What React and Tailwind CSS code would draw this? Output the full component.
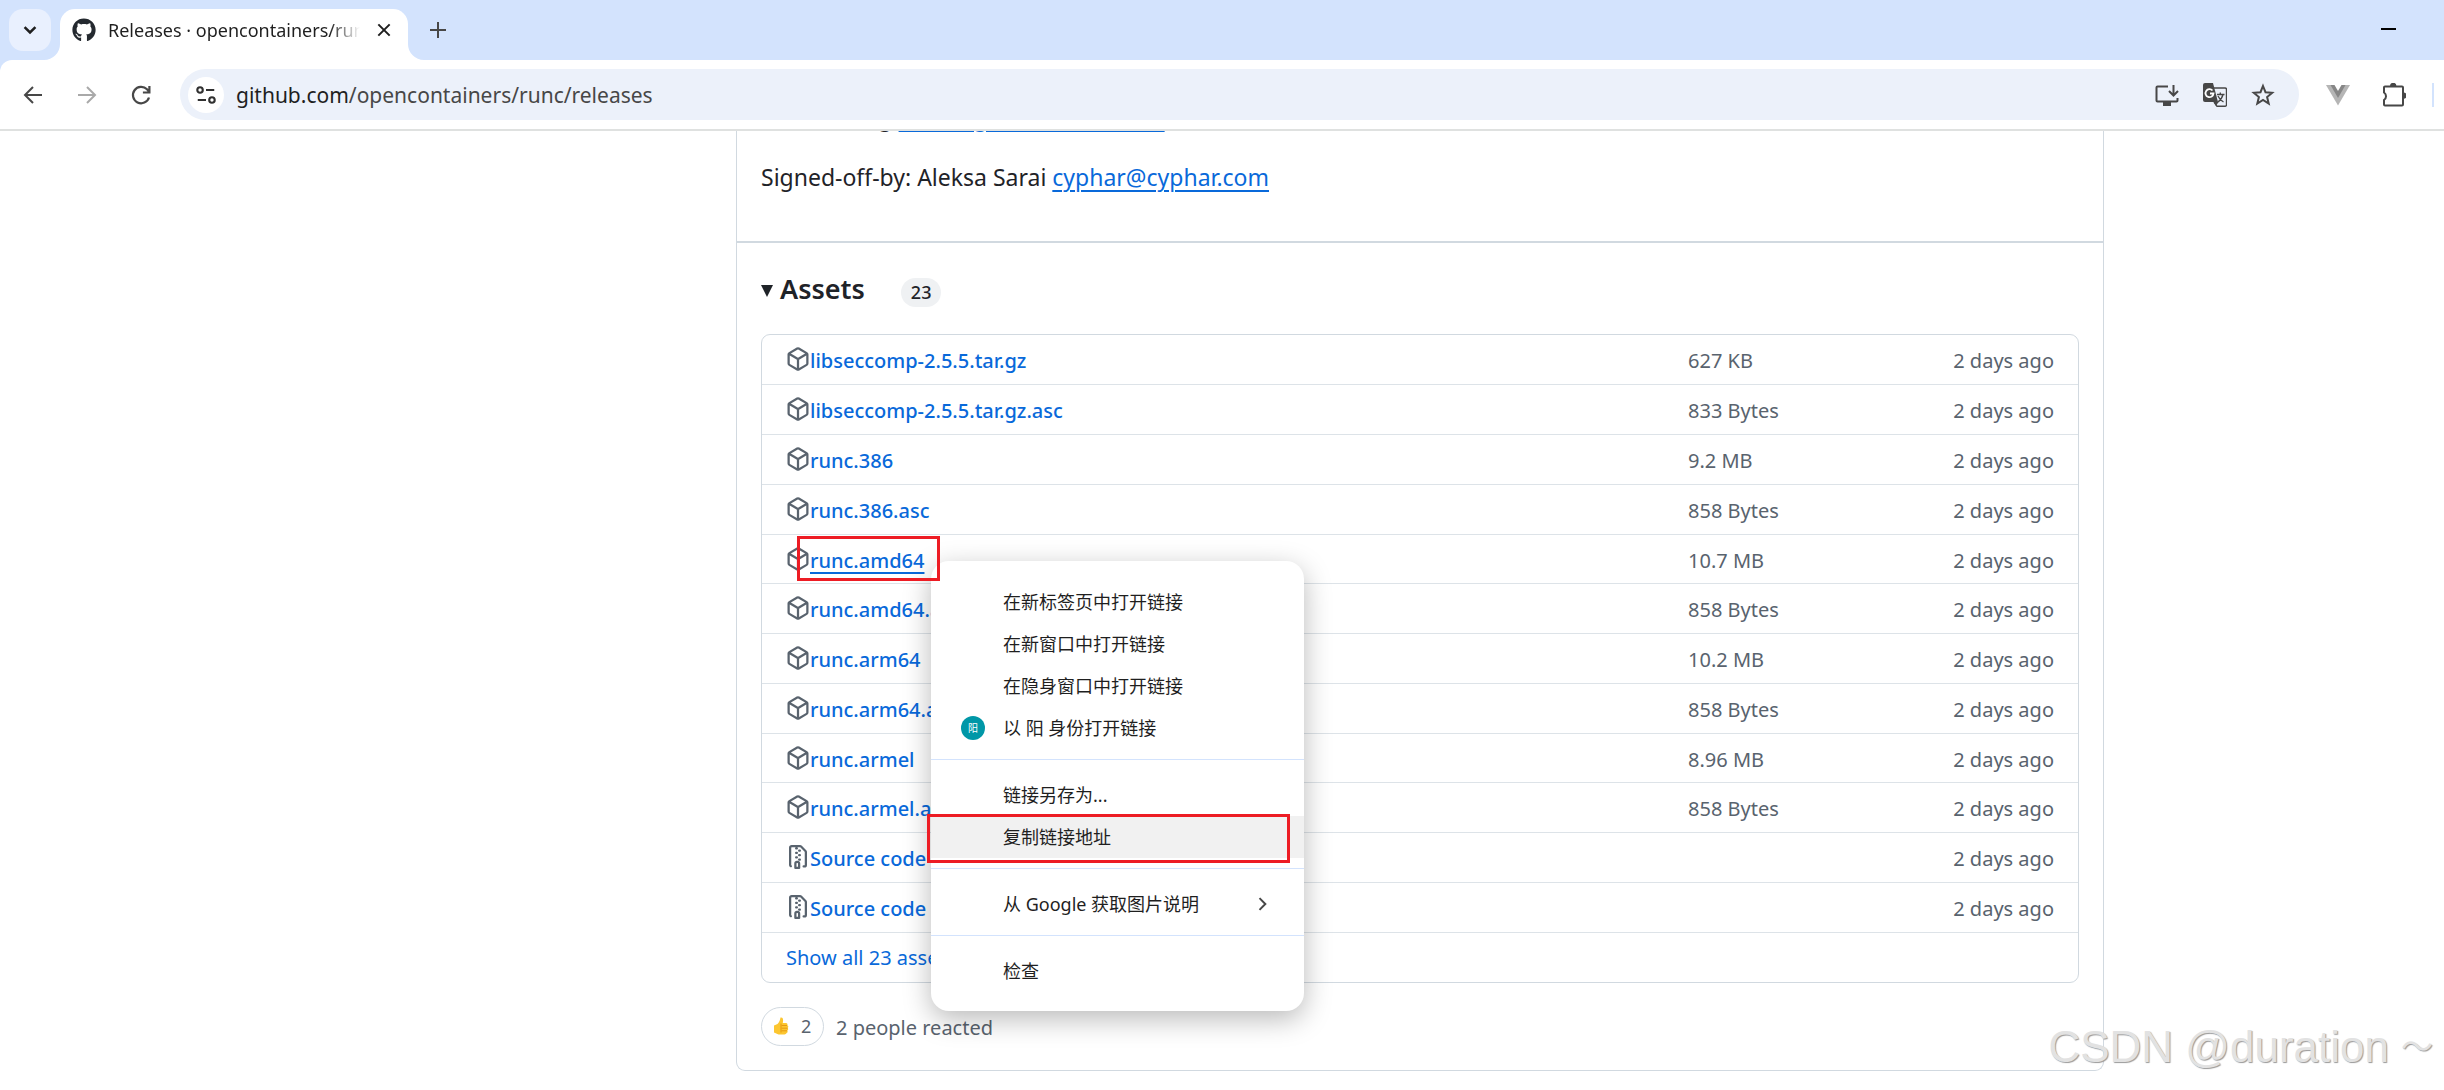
import { FaGithub } from "react-icons/fa";

const assets = [
  ["libseccomp-2.5.5.tar.gz", "627 KB", "cube"],
  ["libseccomp-2.5.5.tar.gz.asc", "833 Bytes", "cube"],
  ["runc.386", "9.2 MB", "cube"],
  ["runc.386.asc", "858 Bytes", "cube"],
  ["runc.amd64", "10.7 MB", "cube"],
  ["runc.amd64.asc", "858 Bytes", "cube"],
  ["runc.arm64", "10.2 MB", "cube"],
  ["runc.arm64.asc", "858 Bytes", "cube"],
  ["runc.armel", "8.96 MB", "cube"],
  ["runc.armel.asc", "858 Bytes", "cube"],
  ["Source code (zip)", "", "zip"],
  ["Source code (tar.gz)", "", "zip"],
];

const menuGroups = [
  [
    { label: "在新标签页中打开链接" },
    { label: "在新窗口中打开链接" },
    { label: "在隐身窗口中打开链接" },
    { label: "以 阳 身份打开链接", avatar: "阳" },
  ],
  [{ label: "链接另存为..." }, { label: "复制链接地址", active: true }],
  [{ label: "从 Google 获取图片说明", submenu: true }],
  [{ label: "检查" }],
];

function Cube() {
  return (
    <svg className="size-6 shrink-0" viewBox="0 0 16 16" fill="#59636e" aria-hidden="true">
      <path d="m8.878.392 5.25 3.045c.54.314.872.89.872 1.514v6.098a1.75 1.75 0 0 1-.872 1.514l-5.25 3.045a1.75 1.75 0 0 1-1.756 0l-5.25-3.045A1.75 1.75 0 0 1 1 11.049V4.951c0-.624.332-1.201.872-1.514L7.122.392a1.75 1.75 0 0 1 1.756 0ZM7.875 1.69l-4.63 2.685L8 7.133l4.755-2.758-4.63-2.685a.248.248 0 0 0-.25 0ZM2.5 5.677v5.372c0 .09.047.171.125.216l4.625 2.683V8.432Zm6.25 8.271 4.625-2.683a.25.25 0 0 0 .125-.216V5.677L8.75 8.432Z" />
    </svg>
  );
}

function Zip() {
  return (
    <svg className="size-6 shrink-0" viewBox="0 0 16 16" fill="#59636e" aria-hidden="true">
      <path d="M3.5 1.75v11.5c0 .09.048.173.126.217a.75.75 0 0 1-.752 1.298A1.748 1.748 0 0 1 2 13.25V1.75C2 .784 2.784 0 3.75 0h5.586c.464 0 .909.185 1.237.513l2.914 2.914c.329.328.513.773.513 1.237v8.586A1.75 1.75 0 0 1 12.25 15h-.5a.75.75 0 0 1 0-1.5h.5a.25.25 0 0 0 .25-.25V4.664a.25.25 0 0 0-.073-.177L9.513 1.573a.25.25 0 0 0-.177-.073H7.25a.75.75 0 0 1 0 1.5h-.5a.75.75 0 0 1 0-1.5h-3a.25.25 0 0 0-.25.25Zm3.75 8.75h.5c.966 0 1.75.784 1.75 1.75v3a.75.75 0 0 1-.75.75h-2.5a.75.75 0 0 1-.75-.75v-3c0-.966.784-1.75 1.75-1.75ZM6 5.25a.75.75 0 0 1 .75-.75h.5a.75.75 0 0 1 0 1.5h-.5A.75.75 0 0 1 6 5.25Zm.75 2.25h.5a.75.75 0 0 1 0 1.5h-.5a.75.75 0 0 1 0-1.5ZM8 6.75A.75.75 0 0 1 8.75 6h.5a.75.75 0 0 1 0 1.5h-.5A.75.75 0 0 1 8 6.75ZM8.75 3h.5a.75.75 0 0 1 0 1.5h-.5a.75.75 0 0 1 0-1.5ZM8 9.75A.75.75 0 0 1 8.75 9h.5a.75.75 0 0 1 0 1.5h-.5A.75.75 0 0 1 8 9.75Zm-1 2.5v2.25h1v-2.25a.25.25 0 0 0-.25-.25h-.5a.25.25 0 0 0-.25.25Z" />
    </svg>
  );
}

function Stroke({ size = "size-6", color = "#474747", width = 2, children }) {
  return (
    <svg className={size} viewBox="0 0 24 24" fill="none" stroke={color} strokeWidth={width} aria-hidden="true">
      {children}
    </svg>
  );
}

function TabStrip() {
  return (
    <div className="flex h-[60px] items-start bg-[#d3e3fd] pt-[9px] pr-[48px] pl-[9px]">
      <button aria-label="Search tabs" className="flex size-[42px] items-center justify-center rounded-[14px] bg-[#e9f0fe]">
        <Stroke size="size-5" color="#1f1f1f" width={3}>
          <path d="m5.500 8.500 6.500 6.500 6.500-6.500" />
        </Stroke>
      </button>
      <div className="relative ml-[9px] flex h-[51px] w-[348px] items-start rounded-t-[15px] bg-white pt-[9px] pr-3 pl-3">
        <svg className="absolute bottom-0 -left-4 size-4" viewBox="0 0 16 16" aria-hidden="true">
          <path d="M16 0v16H0A16 16 0 0 0 16 0Z" fill="#fff" />
        </svg>
        <svg className="absolute -right-4 bottom-0 size-4" viewBox="0 0 16 16" aria-hidden="true">
          <path d="M0 0v16h16A16 16 0 0 1 0 0Z" fill="#fff" />
        </svg>
        <FaGithub className="size-6 shrink-0 text-[#24292f]" />
        <span className="ml-3 h-6 w-[252px] overflow-hidden bg-linear-to-r from-[#1f1f1f] from-[88%] to-transparent bg-clip-text text-[18px] leading-6 whitespace-nowrap text-transparent">
          Releases · opencontainers/runc
        </span>
        <button aria-label="Close tab" className="ml-3 flex size-6 items-center justify-center">
          <Stroke size="size-4" color="#1f1f1f" width={3}>
            <path d="m3.500 3.500 17 17M20.500 3.500l-17 17" />
          </Stroke>
        </button>
      </div>
      <button aria-label="New tab" className="ml-[9px] flex size-[42px] items-center justify-center">
        <Stroke size="size-6" width={2}>
          <path d="M12 4v16M4 12h16" />
        </Stroke>
      </button>
      <button aria-label="Minimize" className="ml-auto flex h-10 w-[15px] items-center">
        <span className="h-[2px] w-full bg-black" />
      </button>
    </div>
  );
}

function Toolbar() {
  return (
    <div className="bg-[#d3e3fd]">
      <div className="flex h-[71px] items-center rounded-tl-[12px] border-b-2 border-[#dfe1e0] bg-white pr-[10px] pl-[21px]">
        <button aria-label="Back" className="mr-[30px]">
          <Stroke>
            <path d="M21 12H4M12 4l-8 8 8 8" />
          </Stroke>
        </button>
        <button aria-label="Forward" className="mr-[30px]">
          <Stroke color="#a9a9a9">
            <path d="M3 12h17M12 4l8 8-8 8" />
          </Stroke>
        </button>
        <button aria-label="Reload">
          <Stroke width={2.2}>
            <path d="M20 14.500A8.200 8.200 0 1 1 18 6.300l2 2.200M20.400 3v6.500h-6.500" />
          </Stroke>
        </button>
        <div className="ml-[27px] flex h-[51px] flex-1 items-center rounded-full bg-[#ecf1fa] pr-6 pl-2">
          <button aria-label="Site information" className="flex size-9 items-center justify-center rounded-full bg-white">
            <Stroke size="size-[22px]" color="#303030" width={2.3}>
              <circle cx="5.500" cy="6.500" r="3" />
              <path d="M12 6.500h9M3 17.500h9" />
              <circle cx="18.500" cy="17.500" r="3" />
            </Stroke>
          </button>
          <a href="#releases" className="ml-3 flex-1 text-[21px] leading-7 text-[#474747]">
            <span className="text-[#1f1f1f]">github.com</span>/opencontainers/runc/releases
          </a>
          <div className="flex items-center gap-6">
            <button aria-label="Install app">
              <Stroke size="size-6">
                <path d="M13 3.500H2.500a1 1 0 0 0-1 1v13a1 1 0 0 0 1 1h19a1 1 0 0 0 1-1V15M18.500 2v10M14 8l4.500 4.500L23 8" />
                <path d="M8 19h8v4H8z" fill="#474747" stroke="none" />
              </Stroke>
            </button>
            <button aria-label="Translate">
              <svg className="size-6" viewBox="0 0 24 24" aria-hidden="true">
                <path d="M2 0h8l5 19H2a2 2 0 0 1-2-2V2a2 2 0 0 1 2-2Z" fill="#474747" />
                <path d="M11 5h11a1.500 1.500 0 0 1 1.500 1.500v15A1.500 1.500 0 0 1 22 23.300h-8L11 19" fill="none" stroke="#474747" strokeWidth="1.400" />
                <path d="M11 19h4.500L13 23z" fill="#474747" />
                <path d="M9.500 7.500a4 4 0 1 0 1 3H7" fill="none" stroke="#fff" strokeWidth="1.800" />
                <path d="M14 11.500h7.500M17.300 9.500v2M20 11.500c-.8 3.500-3 6-5 7.500M15 13c1 2.500 3 4.500 5.500 6" fill="none" stroke="#474747" strokeWidth="1.300" />
              </svg>
            </button>
            <button aria-label="Bookmark">
              <Stroke>
                <path d="m12 3 2.500 6.200 6.700.5-5.100 4.300 1.600 6.500L12 17l-5.700 3.500 1.600-6.500-5.100-4.300 6.700-.5Z" />
              </Stroke>
            </button>
          </div>
        </div>
        <button aria-label="Vue devtools" className="ml-[27px]">
          <svg className="size-6" viewBox="0 0 24 24" aria-hidden="true">
            <path d="M0 2h24L12 22.500Z" fill="#b5b5b5" />
            <path d="M4.500 2h15L12 15Z" fill="#868686" />
            <path d="M8.500 2h7L12 8Z" fill="#fff" />
          </svg>
        </button>
        <button aria-label="Extensions" className="ml-8">
          <svg className="size-6" viewBox="0 0 24 24" aria-hidden="true">
            <path d="M2 4.500a1 1 0 0 1 1-1h17a1 1 0 0 1 1 1v17a1 1 0 0 1-1 1H3a1 1 0 0 1-1-1v-4.500a4.500 4.500 0 0 0 0-7.500Z" fill="none" stroke="#474747" strokeWidth="2" />
            <path d="M8 3a3.200 3.200 0 0 1 6.400 0ZM21.500 9.500a3 3 0 0 1 0 6.200Z" fill="#474747" />
          </svg>
        </button>
        <span className="ml-[26px] h-6 w-[2px] bg-[#d3e3fd]" />
      </div>
    </div>
  );
}

function ContextMenu() {
  return (
    <div className="absolute top-[15px] left-[145px] z-10 w-[373px] rounded-[18px] bg-white pt-5 pb-[19px] font-['Noto_Sans','Noto_Sans_CJK_SC',sans-serif] text-[18px] font-normal text-[#1f1f1f] shadow-[0_8px_28px_rgba(0,0,0,0.28)]">
      {menuGroups.map((group, i) => (
        <div key={i} className="border-[#d3e3fd] not-first:mt-[10px] not-first:border-t not-first:pt-[14px]">
          {group.map((item) => (
            <button
              key={item.label}
              className={`relative flex h-[42px] w-full items-center pr-8 text-left ${item.active ? "bg-[#f1f1f1]" : ""}`}
            >
              <span className="flex w-[72px] shrink-0 justify-center pl-1">
                {item.avatar && (
                  <span className="mr-3 ml-5 flex size-6 items-center justify-center rounded-full bg-[#0097a7] text-[10px] text-white">
                    {item.avatar}
                  </span>
                )}
              </span>
              <span className="flex-1 whitespace-nowrap">{item.label}</span>
              {item.submenu && (
                <Stroke size="size-5" width={2.4}>
                  <path d="m9 5 7 7-7 7" />
                </Stroke>
              )}
              {item.active && <span className="absolute -top-[2px] right-[14px] -bottom-[5px] -left-[4px] border-3 border-[#ed1c24]" />}
            </button>
          ))}
        </div>
      ))}
    </div>
  );
}

function AssetName({ name, kind }) {
  const selected = name === "runc.amd64";
  return (
    <span className="relative flex w-fit items-center whitespace-nowrap">
      <span className="pb-1">{kind === "cube" ? <Cube /> : <Zip />}</span>
      <a href={`#${name}`} className={`font-medium text-[#0969da] ${selected ? "underline decoration-2 underline-offset-4" : ""}`}>
        {name}
      </a>
      {selected && (
        <>
          <ContextMenu />
          <span className="absolute -top-[10px] -right-[16px] -bottom-[5px] left-[11px] z-20 border-3 border-[#ed1c24]" />
        </>
      )}
    </span>
  );
}

export default function App() {
  return (
    <div className="relative overflow-hidden bg-white font-['Noto_Sans','Noto_Sans_CJK_SC',sans-serif] text-[#1f2328]">
      <header className="relative z-10">
        <TabStrip />
        <Toolbar />
      </header>
      <main className="pr-[340px] pb-[18px] pl-[736px]">
        <article className="rounded-b-[9px] border border-t-0 border-[#d1d9e0]">
          <section className="border-b-2 border-[#d1d9e0] px-6 pb-[46px] text-[23px] leading-9">
            <p className="-mt-8 whitespace-nowrap">
              Fix: lifubang{" "}
              <a href="#lifubang" className="text-[#0969da] underline decoration-2 underline-offset-4">lifubang@acmcoder.com</a>
            </p>
            <p className="mt-6">
              Signed-off-by: Aleksa Sarai{" "}
              <a href="#cyphar" className="text-[#0969da] underline decoration-2 underline-offset-4">cyphar@cyphar.com</a>
            </p>
          </section>
          <section className="px-6 pt-7 pb-6">
            <h3 className="flex h-9 items-center">
              <button className="flex items-center gap-[7px] text-[27px] leading-9 font-semibold">
                <svg className="mt-1 size-3" viewBox="0 0 12 12" aria-hidden="true">
                  <path d="M0 0h12L6 12Z" fill="#1f2328" />
                </svg>
                Assets
              </button>
              <span className="mt-[6px] ml-9 rounded-full bg-[#eff1f3] px-[10px] text-[18px] leading-[29px] font-medium">23</span>
            </h3>
            <div className="mt-[27px] rounded-[9px] border border-[#d1d9e0] text-[20px] leading-[30px]">
              <table className="w-full border-collapse">
                <tbody className="[&>tr]:h-[50px] [&>tr:nth-child(4n+1)]:h-[49px]">
                  {assets.map(([name, size, kind]) => (
                    <tr key={name} className="border-b border-[#dde3e8]">
                      <td className="pt-1 pl-6">
                        <AssetName name={name} kind={kind} />
                      </td>
                      <td className="w-[200px] pt-1 text-[#59636e]">{size}</td>
                      <td className="w-[190px] pt-1 pr-6 text-right text-[#59636e]">2 days ago</td>
                    </tr>
                  ))}
                </tbody>
              </table>
              <div className="flex h-[49px] items-center pt-[2px] pl-6">
                <button className="text-[#0969da]">Show all 23 assets</button>
              </div>
            </div>
            <div className="mt-6 flex items-center text-[20px] text-[#59636e]">
              <button className="flex h-[39px] w-[63px] items-center gap-[11px] rounded-full border border-[#d1d9e0] pl-[10px] text-[18px]">
                <svg className="size-[18px]" viewBox="0 0 18 18" aria-hidden="true">
                  <path d="M2 8.500 5.500 7C7.500 5 8 3 8.500.5c2.300-.3 3.200 1.500 2.300 5.500H14a1.500 1.500 0 0 1 1.300 2.300 1.500 1.500 0 0 1 .3 2.700 1.500 1.500 0 0 1-.4 2.600 1.500 1.500 0 0 1-.7 2.500c-.3 1-1 1.400-2 1.400H6.500L2 15.500Z" fill="#fcc630" />
                  <path d="M9.500 8.500H15M9.500 11.200h6M9.500 13.800h5.500M9 6.500v9" stroke="#e69a12" strokeWidth="1" fill="none" />
                </svg>
                2
              </button>
              <span className="ml-3 pt-1">2 people reacted</span>
            </div>
          </section>
        </article>
      </main>
      <div className="absolute right-[11px] bottom-[18px] z-20 flex items-center font-['Liberation_Sans','Noto_Sans_CJK_SC',sans-serif] text-[44px] leading-[48px] whitespace-nowrap text-[#e2e2e2] [text-shadow:1px_1px_1px_#999]">
        <span>CSDN @duration</span>
        <span className="ml-3 text-[32px]">～</span>
      </div>
    </div>
  );
}
